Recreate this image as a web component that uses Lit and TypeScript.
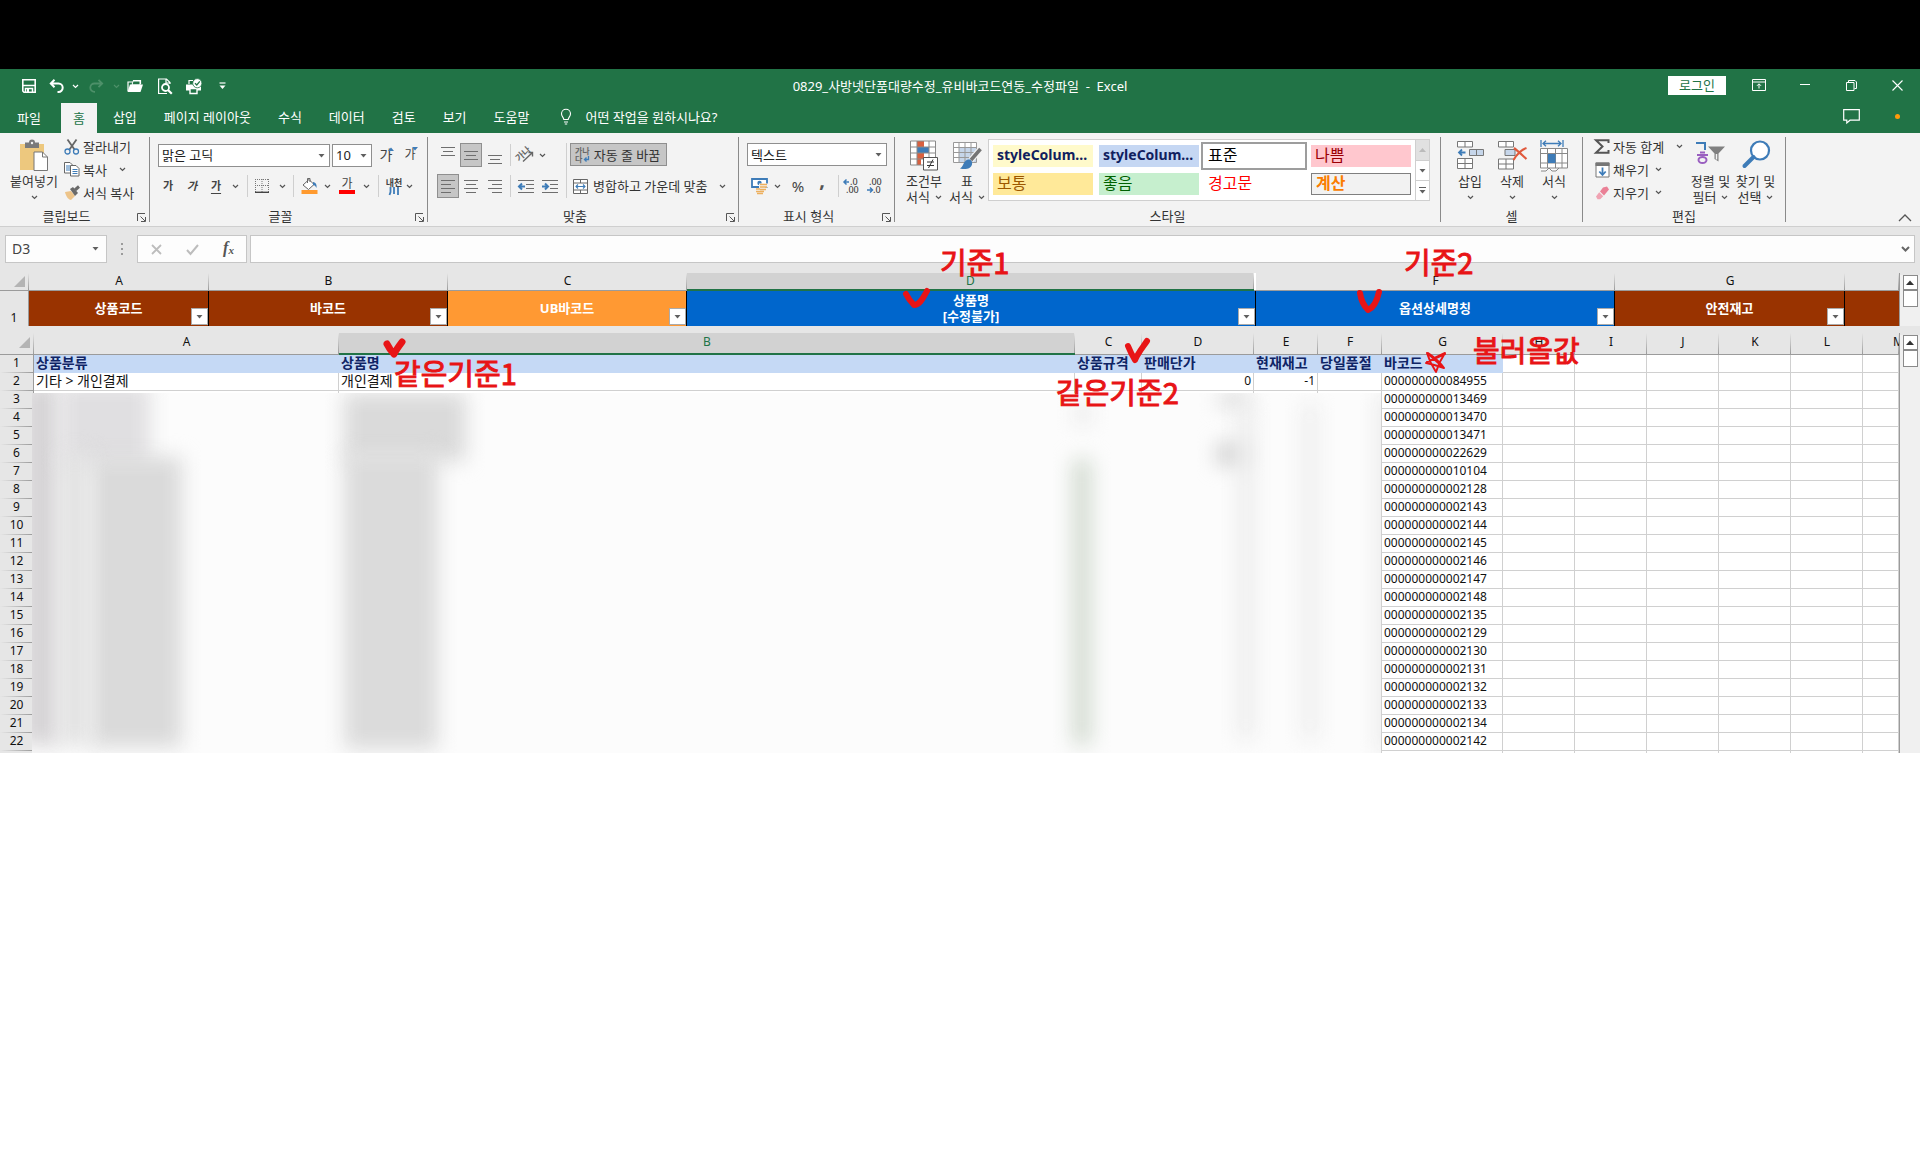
import { LitElement, html, css, svg, nothing, type TemplateResult } from "lit";
import { customElement } from "lit/decorators.js";
import { classMap } from "lit/directives/class-map.js";

const icon = (w: number, h: number, body: unknown) =>
  html`<svg class="icon" width=${w} height=${h} viewBox="0 0 ${w} ${h}" fill="none" aria-hidden="true">${body}</svg>`;

const GREY = "#6e6e6e";
const BLUE = "#3e7cb8";

const chevron = (color = "#555") =>
  icon(7, 5, svg`<path d="M1 1l2.5 2.5L6 1" stroke=${color} stroke-width="1.2"/>`);
const triangle = () => icon(7, 4, svg`<path d="M0.5 0h6L3.5 3.5z" fill="#606060"/>`);

const saveIcon = icon(16, 16, svg`<path d="M1.8 1.8h12.4v12.4H3l-1.200-1.200z" stroke="#fff" stroke-width="1.600"/><path d="M2 7.500h12" stroke="#fff" stroke-width="1.500"/><path d="M4.500 15v-4.500h7V15" stroke="#fff" stroke-width="1.500"/><path d="M6 11h2v3H6z" fill="#fff"/>`);
const undoIcon = icon(16, 14, svg`<path d="M5.500 0.800L1.800 4.500l3.700 3.700M2 4.500h7.500a4.200 4.200 0 010 8.400H8.500" stroke="#fff" stroke-width="2"/>`);
const redoIcon = icon(16, 14, svg`<path d="M10.500 0.800l3.700 3.700-3.700 3.700M14 4.500H6.500a4.200 4.200 0 000 8.400H7" stroke="#4d9069" stroke-width="1.800"/>`);
const folderIcon = icon(18, 14, svg`<path d="M2 12V3h4M7.500 3V1.500h7V5" stroke="#fff" stroke-width="1.200"/><path d="M7 2h7v4H6z" fill="#217346" stroke="#fff"/><path d="M4 5.500h13L14.500 13H1.500z" fill="#fff"/>`);
const previewIcon = icon(16, 17, svg`<path d="M10 15.500H1.600V1h7.900l3.500 3.500V6M9 1v4h4" stroke="#fff" stroke-width="1.200"/><circle cx="8.500" cy="9.500" r="3.500" stroke="#fff" stroke-width="1.800"/><path d="M11 12l3.800 3.800" stroke="#fff" stroke-width="2.200"/>`);
const printIcon = icon(18, 17, svg`<path d="M4 6V2.500h4" stroke="#fff" stroke-width="1.200"/><path d="M1 6.500h15v6H1z" fill="#fff"/><path d="M5 10.500h7v5H5z" fill="#217346" stroke="#fff" stroke-width="1.400"/><circle cx="12.300" cy="5.200" r="4.600" fill="#fff" stroke="#217346" stroke-width="0.800"/><path d="M10 5.200l1.800 1.800 3-3.600" stroke="#217346" stroke-width="1.300"/>`);
const moreIcon = icon(7, 8, svg`<path d="M0.500 1h6" stroke="#fff" stroke-width="1.200"/><path d="M0.500 3.500h6l-3 3.500z" fill="#fff"/>`);
const bulbIcon = icon(12, 17, svg`<path d="M3.800 11.500c0-2-2.300-3-2.300-5.700a4.500 4.500 0 019 0c0 2.700-2.300 3.700-2.300 5.700zM4 14h4M4.800 16h2.400" stroke="#fff" stroke-width="1.100"/>`);
const ribbonOptIcon = icon(14, 12, svg`<path d="M.5.500h13v11H.500zM.500 3h13M7 9.500V5M5 6.800l2-2 2 2" stroke="#fff"/>`);
const minIcon = icon(10, 10, svg`<path d="M0 4.500h10" stroke="#fff"/>`);
const restoreIcon = icon(11, 11, svg`<path d="M.5 2.500h7.500v8H.500zM2.500 2.500V.500h6.500l1.500 1.500v6.500H8.500" stroke="#fff"/>`);
const closeIcon = icon(11, 11, svg`<path d="M.5.500l10 10M10.500.500l-10 10" stroke="#fff" stroke-width="1.100"/>`);
const commentIcon = icon(17, 15, svg`<path d="M.7.700h15.600v10.500H7L3.800 14v-2.800H.700z" stroke="#fff" stroke-width="1.200"/>`);

const pasteIcon = icon(30, 32, svg`<path d="M1 4h24v26H1z" fill="#edc87e"/><path d="M6 2.500h4a3 3 0 016 0h4V8H6z" fill="#7a7a7a"/><circle cx="13" cy="3" r="1.200" fill="#f3f3f3"/><path d="M15 12h8.500l5 5v13.500H15z" fill="#fff" stroke="#777"/><path d="M23.500 12v5h5" stroke="#777"/>`);
const cutIcon = icon(16, 16, svg`<path d="M3.500.500l7 10M12.500.500l-7 10" stroke="#666" stroke-width="1.800"/><circle cx="3.500" cy="12.500" r="2.500" stroke=${BLUE} stroke-width="1.300"/><circle cx="12" cy="12.500" r="2.500" stroke=${BLUE} stroke-width="1.300"/>`);
const copyIcon = icon(16, 15, svg`<path d="M.5.500h5.500l2.500 2.500v8H.500z" fill="#fff" stroke="#666"/><path d="M2 4h4M2 6h4M2 8h4" stroke=${BLUE}/><path d="M6.500 3.500h5.500l3 3v7.500H6.500z" fill="#fff" stroke="#666"/><path d="M8.500 7.500h5M8.500 9.500h5M8.500 11.500h5" stroke=${BLUE}/>`);
const brushIcon = icon(16, 14, svg`<path d="M1 6l6-1 4 5-4 4c-2 0-5-3-6-8z" fill="#edc48a"/><path d="M6 3l3-2 5 6-3 3z" fill="#6a6a6a"/><path d="M11 4l4-3.500" stroke="#6a6a6a" stroke-width="3"/>`);
const borderIcon = icon(14, 14, svg`<path d="M.5 0v13M13.500 0v13M7 0v13M0 .500h14M0 6.500h14" stroke="#777" stroke-dasharray="1 1"/><path d="M0 13.300h14" stroke="#444" stroke-width="1.400"/>`);
const fillIcon = icon(17, 16, svg`<path d="M2 7l6-5.500 5 5L7.500 11.500z" fill="#fff" stroke="#666"/><path d="M6.500 5V.500h2.500V4" stroke="#666"/><path d="M12 4c3 .5 4 3 3.500 6-1-2-2-3-3.500-3z" fill=${BLUE}/><path d="M.5 12h16v4H.500z" fill="#ff9a2e"/>`);
const lines = (rows: [number, number][], h: number) =>
  icon(14, h, svg`${rows.map(([x, w], i) => svg`<path d="M${x} ${i * 4 + 0.5}h${w}" stroke=${GREY}/>`)}`);
const rowsThree = lines([[0, 14], [2, 10], [0, 14]], 9);
const alignLeft = lines([[0, 14], [0, 10], [0, 14], [0, 10]], 13);
const alignCenter = lines([[0, 14], [2, 10], [0, 14], [2, 10]], 13);
const alignRight = lines([[0, 14], [4, 10], [0, 14], [4, 10]], 13);
const rotateIcon = icon(18, 16, svg`<g transform="rotate(-42 8 8)"><text x="-1" y="9" font-size="9" font-weight="700" fill="#666">가나</text></g><path d="M6 14.500L15 6M11.500 5.500H15.500V9.500" stroke="#666" stroke-width="1.400"/>`);
const indent = (dir: number) =>
  icon(17, 13, svg`<path d="M0 .500h16M8 4.500h8M8 8.500h8M0 12.500h16" stroke=${GREY}/>${dir < 0
    ? svg`<path d="M7 6.500H2M4 3.500l-3 3 3 3" stroke=${BLUE} stroke-width="2"/>`
    : svg`<path d="M0 6.500h5M3 3.500l3 3-3 3" stroke=${BLUE} stroke-width="2"/>`}`);
const wrapIcon = icon(15, 16, svg`<text x="0" y="7" font-size="8" font-weight="700" fill="#666">가나</text><text x="0" y="15" font-size="8" font-weight="700" fill="#666">다</text><path d="M13.500 9v3.500H9.500M11.500 10.500l-2 2 2 2" stroke=${BLUE} stroke-width="1.300"/>`);
const mergeIcon = icon(15, 15, svg`<path d="M.5.500h14v14H.500zM.500 4h14M.500 11h14M7.500.500V4M7.500 11v3.500" stroke="#666" fill="#fff"/><path d="M3 7.500h9M5 5.500l-2 2 2 2M10 5.500l2 2-2 2" stroke=${BLUE} stroke-width="1.100"/>`);
const currencyIcon = icon(17, 16, svg`<path d="M1 1h15v8H1z" fill="#fff" stroke=${BLUE} stroke-width="1.800"/><circle cx="8.500" cy="5" r="2.200" fill=${BLUE}/><path d="M8 5.500h9v4h-3v6.500H4v-4h4z" fill="#f3f3f3"/><path d="M9 6.500h7M9 9h7M5 11h4M9 11.500h6M5 13.500h8M6 15.500h6" stroke="#edb05e" stroke-width="1.500"/>`);
const decIcon = (inc: boolean) =>
  icon(17, 16, svg`<text x=${inc ? 7 : 3} y="7" font-size="9" font-weight="500" fill="#444">${inc ? ".0" : ".00"}</text><text x=${inc ? 3 : 7} y="15" font-size="9" font-weight="500" fill="#444">${inc ? ".00" : ".0"}</text>${inc
    ? svg`<path d="M6 4H1.500M3.500 1.500L1 4l2.500 2.500" stroke=${BLUE} stroke-width="1.500"/>`
    : svg`<path d="M1 12h5M4 9.500L6.500 12 4 14.500" stroke=${BLUE} stroke-width="1.500"/>`}`);
const condIcon = icon(30, 31, svg`<path d="M1.500 1h25v24h-25z" fill="#fff"/><path d="M8 1h7v6H8zM8 13h7v6H8z" fill="#d9603f"/><path d="M8 7h12v6H8z" fill=${BLUE}/><path d="M8 19h4v6H8z" fill="#d9603f"/><path d="M1.500 1h25v24h-25zM1.500 7h25M1.500 13h25M1.500 19h25M8 1v24M20 1v24" stroke="#8a8a8a"/><path d="M14.500 17.500h14v12.500h-14z" fill="#fff" stroke="#555"/><path d="M18 22h7M18 25.500h7M24 19.500l-4.500 8.500" stroke="#333"/>`);
const tableIcon = icon(30, 30, svg`<path d="M1.500 2.500h23v20h-23z" fill="#fff"/><path d="M7 8h17v14H7z" fill="#c6d6ea"/><path d="M1.500 2.500h23v20h-23zM1.500 7.500h23M1.500 12.500h23M1.500 17.500h23M7 2.500v20M13 2.500v20M19 2.500v20" stroke="#999"/><path d="M28.500 9L19 20" stroke="#f3f3f3" stroke-width="6"/><path d="M28.500 9L19 20" stroke="#757575" stroke-width="3.500"/><path d="M14 20.500c3-2.500 7 0 6 4-1 4-6 5.500-12 4 3-1.500 3-5.500 6-8z" fill=${BLUE}/>`);
const insertIcon = icon(28, 30, svg`<path d="M1.500 1.500h15v5.500h-15zM9 1.500V7M1.500 18.500h15v10h-15zM9 18.500v10M1.500 23.500h15" fill="#fff" stroke="#777"/><path d="M13.500 9.500h14v6h-14zM20.500 9.500v6" fill="#c6d6ea" stroke="#777"/><path d="M9.500 12.500H4M6 9.500l-3 3 3 3" stroke=${BLUE} stroke-width="1.800"/>`);
const deleteIcon = icon(31, 30, svg`<path d="M1.500 1.500h15v5.500h-15zM9 1.500V7M1.500 19h15v10h-15zM9 19v10M1.500 24h15" fill="#fff" stroke="#777"/><path d="M8 9.500h10v6H8z" fill="#c6d6ea" stroke="#777"/><path d="M17 8c4 3 8 7 12.500 11M29.500 8c-6 2-10 7-13 12" stroke="#e0593c" stroke-width="2.200"/>`);
const formatIcon = icon(30, 32, svg`<path d="M2 0v7M24 0v7M4 3.500h18M7 .8L4 3.500l3 2.700M19 .8l3 2.700-3 2.700" stroke=${BLUE} stroke-width="1.300"/><path d="M1.500 8.500h27v19H19l-3 3h-4l-2-1.500-3 1.500h-5.500z" fill="#fff"/><path d="M1.500 8.500h27v19.500h-27zM1.500 13.500h27M1.500 23h27M8.500 8.500V28M16.500 8.500V28M23 8.500V28M2 31h5l3-3 3 3h4l3-3" stroke="#888"/><path d="M9 14h7.500v9H9z" fill=${BLUE}/>`);
const sumIcon = icon(16, 15, svg`<path d="M14.500 4V1.200H2l6.500 6.300L2 13.800h12.500V11" stroke="#555" stroke-width="2"/>`);
const fillDownIcon = icon(15, 16, svg`<path d="M1 1h13v14H1z" fill="#fff" stroke="#777"/><path d="M.5.500h14V4H.500z" fill="#777"/><path d="M7.500 5.500v7M4.300 9.500l3.200 3.500 3.200-3.500" stroke=${BLUE} stroke-width="1.800"/>`);
const eraseIcon = icon(15, 14, svg`<path d="M8 1.500l4-1 2 3-5 6-4-4z" fill="#ea8096"/><path d="M4.200 6.300l4 4-3 3H2.500L1 10.500z" fill="#f0a3b3"/>`);
const sortIcon = icon(31, 26, svg`<path d="M1 3h9v7" stroke=${BLUE} stroke-width="2"/><path d="M2 15h11M5 12.500h5" stroke="#9a5fc0" stroke-width="1.800"/><ellipse cx="7.500" cy="20" rx="4" ry="3" stroke="#9a5fc0" stroke-width="2"/><path d="M13 6.500h17l-6.500 7v8l-4-2.500v-5.500z" fill="#808080"/><path d="M21.500 14v5.500" stroke="#f3f3f3" stroke-width="1.500"/>`);
const findIcon = icon(28, 28, svg`<circle cx="18" cy="10.500" r="9" fill="#fff" stroke=${BLUE} stroke-width="2.200"/><path d="M11.500 17L2.500 26" stroke=${BLUE} stroke-width="4" stroke-linecap="round"/>`);
const launcherIcon = icon(9, 9, svg`<path d="M.5 8V.500H8M3.500 3.500L8 8M8.500 4v4.500H4" stroke="#555"/>`);
const collapseIcon = icon(14, 8, svg`<path d="M1 7l6-6 6 6" stroke="#555" stroke-width="1.300"/>`);
const cancelIcon = icon(11, 11, svg`<path d="M1 1l9 9M10 1l-9 9" stroke="#bdbdbd" stroke-width="1.800"/>`);
const enterIcon = icon(13, 11, svg`<path d="M1 6l3.500 4L12 1" stroke="#bdbdbd" stroke-width="2"/>`);
const arrowUp = icon(8, 5, svg`<path d="M0 5l4-4.500L8 5z" fill="#333"/>`);

const TABS = ["파일", "홈", "삽입", "페이지 레이아웃", "수식", "데이터", "검토", "보기", "도움말"];
const STYLES: [string, string][] = [
  ["styleColum...", "note"], ["styleColum...", "head"], ["표준", "normal"], ["나쁨", "bad"],
  ["보통", "neutral"], ["좋음", "good"], ["경고문", "warn"], ["계산", "calc"],
];
const BARCODES = [
  "000000000084955", "000000000013469", "000000000013470", "000000000013471", "000000000022629",
  "000000000010104", "000000000002128", "000000000002143", "000000000002144", "000000000002145",
  "000000000002146", "000000000002147", "000000000002148", "000000000002135", "000000000002129",
  "000000000002130", "000000000002131", "000000000002132", "000000000002133", "000000000002134",
  "000000000002142",
];
const COLS = ["A", "B", "C", "D", "E", "F", "G", "H", "I", "J", "K", "L", "M"];
const HEADINGS = ["상품분류", "상품명", "상품규격", "판매단가", "현재재고", "당일품절", "바코드"];

const base = css`
  * { box-sizing: border-box; }
  svg text { font-family: "Noto Sans", "Noto Sans CJK KR", sans-serif; }
  .icon { display: block; flex: none; overflow: visible; }
  button, input, select {
    font: inherit; color: inherit; margin: 0; padding: 0; border: 0; background: none; border-radius: 0; outline: none;
  }
  button { display: flex; align-items: center; justify-content: center; white-space: nowrap; }
`;

@customElement("title-bar")
class TitleBar extends LitElement {
  static styles = [base, css`
    :host { display: block; background: #217346; color: #fff; }
    .title { display: grid; grid-template-columns: 1fr auto 1fr; height: 34px; align-items: center; }
    .quick { display: grid; grid-template-columns: 26px 30px 6px 36px 4px 34px 26px 32px 25px; padding-left: 16px; justify-items: center; align-items: center; }
    .name { font-size: 13px; white-space: pre; line-height: 16px; }
    .window { display: flex; justify-content: flex-end; align-items: center; height: 34px; padding-bottom: 2px; }
    .window button { width: 46px; height: 30px; }
    .window .login { width: 58px; height: 19px; background: #fff; color: #217346; margin-right: 10px; padding-bottom: 1px; line-height: 16px; }
    .tabs { display: flex; height: 30px; align-items: stretch; line-height: 16px; }
    .tabs button { padding-bottom: 3px; }
    .tab { padding: 0 14px 0 13px; }
    .tab.first { padding: 0 20px 0 17px; }
    .tab.on { background: #f3f3f3; color: #217346; padding: 0 12px; margin-right: 3px; }
    .tell { padding: 0 14px; gap: 13px; margin-left: 3px; }
    .right { margin-left: auto; display: flex; }
    .right button { width: 46px; }
    .dot { width: 5px; height: 5px; border-radius: 50%; background: #ff9a0a; }
  `];
  render() {
    const q: [string, TemplateResult][] = [
      ["저장", saveIcon], ["실행 취소", undoIcon], ["실행 취소 목록", chevron("#fff")], ["다시 실행", redoIcon],
      ["다시 실행 목록", chevron("#4d9069")], ["열기", folderIcon], ["미리 보기", previewIcon], ["인쇄", printIcon], ["사용자 지정", moreIcon],
    ];
    const w: [string, TemplateResult][] = [
      ["리본 표시 옵션", ribbonOptIcon], ["최소화", minIcon], ["이전 크기로", restoreIcon], ["닫기", closeIcon],
    ];
    return html`
      <div class="title">
        <div class="quick">${q.map(([l, i]) => html`<button aria-label=${l}>${i}</button>`)}</div>
        <div class="name">0829_사방넷단품대량수정_유비바코드연동_수정파일  -  Excel</div>
        <div class="window"><button class="login">로그인</button>${w.map(([l, i]) => html`<button aria-label=${l}>${i}</button>`)}</div>
      </div>
      <nav class="tabs">
        ${TABS.map((t, i) => html`<button class=${classMap({ tab: true, first: i === 0, on: i === 1 })}>${t}</button>`)}
        <button class="tell">${bulbIcon}어떤 작업을 원하시나요?</button>
        <div class="right"><button aria-label="메모">${commentIcon}</button><button aria-label="알림"><span class="dot"></span></button></div>
      </nav>`;
  }
}

@customElement("ribbon-bar")
class RibbonBar extends LitElement {
  static styles = [base, css`
    :host { display: flex; height: 94px; background: #f3f3f3; border-bottom: 1px solid #cfcfcf; color: #333; line-height: 16px; }
    .group { display: grid; grid-template-rows: 76px 16px; flex: none; }
    .rule { width: 1px; height: 85px; margin-top: 4px; background: #8a8a8a; flex: none; }
    .foot { display: flex; align-items: center; }
    .foot span { flex: 1; text-align: center; padding-bottom: 2px; }
    .foot button { width: 16px; }
    .clip { width: 149px; } .font { width: 277px; } .align { width: 310px; } .number { width: 155px; }
    .style { width: 545px; } .cells { width: 141px; } .edit { width: 202px; }
    .row { display: flex; }
    .big { flex-direction: column; justify-content: flex-start; padding-top: 7px; height: 76px; }
    .pic { height: 33px; display: flex; align-items: flex-start; justify-content: center; }
    .chev { height: 16px; display: flex; align-items: center; }
    .two { display: flex; align-items: center; gap: 5px; }
    .paste { width: 56px; margin-left: 6px; margin-right: 2px; }
    .list { display: grid; grid-template-rows: 23px 23px 23px; padding-top: 2px; align-content: start; }
    .list button { justify-content: flex-start; gap: 3px; }
    .list .glyph { width: 16px; display: flex; justify-content: center; }
    .list .chev { margin-left: 9px; }
    .list .far { margin-left: 9px; } .list .near { margin-left: 3px; }
    .rows { display: grid; grid-template-rows: 24px 24px; row-gap: 7px; padding-top: 10px; align-content: start; }
    .grid { display: grid; justify-items: center; align-items: center; height: 24px; }
    .f1 { grid-template-columns: 172px 2px 40px 2px 26px 22px; padding-left: 8px; }
    .f2 { grid-template-columns: 24px 24px 24px 14px 10px 20px 20px 2px 30px 7px 32px 7px 16px 16px 14px; padding-left: 6px; }
    .a1 { grid-template-columns: 23px 24px 24px 7px 24px 8px; padding-left: 8px; }
    .a2 { grid-template-columns: 23px 24px 24px 7px 24px 24px; padding-left: 8px; }
    .a1 .on, .a2 .on { width: 22px; height: 24px; background: #c6c6c6; border: 1px solid #8f8f8f; }
    .hi { padding-bottom: 8px; } .lo { padding-top: 8px; }
    .alignbody { display: grid; grid-template-columns: 134px 8px 1fr; }
    .tall { margin-top: 10px; height: 55px; }
    .wrap { width: 97px; height: 23px; gap: 4px; background: #c6c6c6; border: 1px solid #8f8f8f; padding-right: 2px; }
    .merge { gap: 5px; padding-left: 3px; justify-content: flex-start; height: 24px; }
    .merge .icon:last-child { margin-left: 7px; }
    .n2 { grid-template-columns: 24px 12px 30px 18px 14px 12px 34px; padding-left: 8px; }
    .vr { width: 1px; height: 22px; background: #cfcfcf; }
    .tall.vr { height: 55px; justify-self: center; }
    .pick { position: relative; display: block; justify-self: start; height: 23px; }
    .pick select { width: 100%; height: 23px; border: 1px solid #8f8f8f; background: #fff; appearance: none; padding-left: 3px; display: block; color: #222; }
    .pick .icon { position: absolute; right: 5px; top: 10px; pointer-events: none; }
    .w172 { width: 172px; } .w40 { width: 40px; } .w140 { width: 140px; margin-left: 8px; }
    .ga { font-size: 11px; font-weight: 700; color: #444; }
    .it { font-style: italic; } .un { text-decoration: underline; text-underline-offset: 3px; }
    .gr { display: flex; align-items: flex-start; color: #444; }
    .gr .icon { margin-left: -4px; }
    .g14 { font-size: 14px; } .g12 { font-size: 12px; }
    .color { flex-direction: column; font-size: 12px; color: #444; line-height: 12px; }
    .bar { width: 16px; height: 4px; background: #f00; }
    .ruby { flex-direction: column; font-size: 9px; font-weight: 700; line-height: 9px; color: #444; }
    .pct { font-size: 15px; color: #444; } .comma { font-size: 20px; font-weight: 700; line-height: 8px; color: #555; padding-bottom: 12px; }
    .cond { width: 46px; margin-left: 6px; } .tbl { width: 40px; margin-right: 1px; }
    .gallery { margin-top: 6px; width: 442px; height: 62px; background: #fff; border: 1px solid #cfcfcf; display: flex; justify-content: space-between; }
    .chips { display: grid; grid-template-columns: 100px 100px 106px 100px; grid-template-rows: 22px 22px; gap: 6px 4px; padding: 5px 0 0 4px; }
    .chip { font-size: 16px; justify-content: flex-start; padding: 0 0 3px 4px; line-height: 18px; }
    .note, .head { font-size: 14px; font-weight: 700; color: #10205e; }
    .note { background: #fffacb; } .head { background: #c5d7f3; margin-left: 2px; margin-right: -2px; }
    .normal { color: #000; border: 2px solid #9d9d9d; height: 28px; margin-top: -3px; padding-left: 5px; }
    .bad { background: #ffc7ce; color: #9c0006; } .neutral { background: #ffe999; color: #9c5700; }
    .good { background: #c6efce; color: #006100; margin-left: 2px; margin-right: -2px; } .warn { color: #f00; padding-left: 7px; }
    .calc { background: #f2f2f2; color: #fa7d00; font-weight: 700; border: 1px solid #7f7f7f; }
    .spin { width: 14px; display: grid; grid-template-rows: 20px 20px 20px; border-left: 1px solid #cfcfcf; }
    .spin button + button { border-top: 1px solid #cfcfcf; }
    .spin button:first-child { background: #e1e1e1; }
    .spin .last { flex-direction: column; gap: 2px; }
    .dash { width: 7px; height: 1px; background: #606060; }
    .c42 { width: 42px; } .c42:first-child { margin-left: 8px; }
    .edit .list { width: 94px; margin-left: 11px; }
    .sort { width: 45px; }
    .end { margin: auto 8px 4px auto; height: 9px; }
  `];

  private group(cls: string, label: string, body: unknown, launch = false) {
    return html`<section class="group ${cls}" aria-label=${label}>${body}
      <div class="foot"><span>${label}</span>${launch ? html`<button aria-label="${label} 설정">${launcherIcon}</button>` : nothing}</div>
    </section><div class="rule"></div>`;
  }
  private big(cls: string, pic: unknown, first: string, second = "") {
    return html`<button class="big ${cls}"><span class="pic">${pic}</span><span>${first}</span>
      ${second ? html`<span class="two">${second}${chevron()}</span>` : html`<span class="chev">${chevron()}</span>`}</button>`;
  }
  private item(pic: unknown, text: string, chev = "") {
    return html`<button><span class="glyph">${pic}</span>${text}${chev ? html`<span class=${chev}>${chevron()}</span>` : nothing}</button>`;
  }
  private pick(cls: string, label: string, value: string) {
    return html`<label class="pick ${cls}"><select aria-label=${label}><option>${value}</option></select>${triangle()}</label>`;
  }
  private chev = (l: string) => html`<button aria-label=${l}>${chevron()}</button>`;

  render() {
    const vr = html`<span class="vr"></span>`;
    return html`
      ${this.group("clip", "클립보드", html`<div class="row">${this.big("paste", pasteIcon, "붙여넣기")}
        <div class="list">${this.item(cutIcon, "잘라내기")}${this.item(copyIcon, "복사", "chev")}${this.item(brushIcon, "서식 복사")}</div></div>`, true)}
      ${this.group("font", "글꼴", html`<div class="rows">
        <div class="grid f1">${this.pick("w172", "글꼴", "맑은 고딕")}<span></span>${this.pick("w40", "글꼴 크기", "10")}<span></span>
          <button class="gr g14" aria-label="글꼴 크기 크게">가${icon(6, 4, svg`<path d="M0 4l3-3.500L6 4z" fill=${BLUE}/>`)}</button>
          <button class="gr g12" aria-label="글꼴 크기 작게">가${icon(6, 4, svg`<path d="M0 0h6L3 3.500z" fill=${BLUE}/>`)}</button></div>
        <div class="grid f2"><button class="ga">가</button><button class="ga it">가</button><button class="ga un">가</button>${this.chev("밑줄")}${vr}
          <button aria-label="테두리">${borderIcon}</button>${this.chev("테두리 목록")}${vr}<button aria-label="채우기 색">${fillIcon}</button>${this.chev("채우기 색 목록")}
          <button class="color">가<span class="bar"></span></button>${this.chev("글꼴 색")}${vr}
          <button class="ruby">내천${icon(10, 8, svg`<path d="M1.500 0v5L.500 8M5 0v7M9 0v8" stroke=${BLUE} stroke-width="1.800"/>`)}</button>${this.chev("윗주")}</div></div>`, true)}
      ${this.group("align", "맞춤", html`<div class="alignbody">
        <div class="rows"><div class="grid a1"><button class="hi" aria-label="위쪽 맞춤">${rowsThree}</button><button class="on" aria-label="가운데 맞춤">${rowsThree}</button>
          <button class="lo" aria-label="아래쪽 맞춤">${rowsThree}</button>${vr}<button aria-label="방향">${rotateIcon}</button>${this.chev("방향 목록")}</div>
          <div class="grid a2"><button class="on" aria-label="왼쪽 맞춤">${alignLeft}</button><button aria-label="가로 가운데 맞춤">${alignCenter}</button>
          <button aria-label="오른쪽 맞춤">${alignRight}</button>${vr}<button aria-label="내어쓰기">${indent(-1)}</button><button aria-label="들여쓰기">${indent(1)}</button></div></div>
        <span class="vr tall"></span>
        <div class="rows"><button class="wrap">${wrapIcon}자동 줄 바꿈</button><button class="merge">${mergeIcon}병합하고 가운데 맞춤${chevron()}</button></div></div>`, true)}
      ${this.group("number", "표시 형식", html`<div class="rows">${this.pick("w140", "표시 형식", "텍스트")}
        <div class="grid n2"><button aria-label="회계 표시 형식">${currencyIcon}</button>${this.chev("통화 목록")}<button class="pct">%</button><button class="comma">,</button>${vr}
        <button aria-label="자릿수 늘림">${decIcon(true)}</button><button aria-label="자릿수 줄임">${decIcon(false)}</button></div></div>`, true)}
      ${this.group("style", "스타일", html`<div class="row">${this.big("cond", condIcon, "조건부", "서식")}${this.big("tbl", tableIcon, "표", "서식")}
        <div class="gallery"><div class="chips">${STYLES.map(([t, c]) => html`<button class="chip ${c}">${t}</button>`)}</div>
        <div class="spin"><button aria-label="위로">${icon(7, 4, svg`<path d="M0 4l3.500-4L7 4z" fill="#bbb"/>`)}</button><button aria-label="아래로">${triangle()}</button>
        <button class="last" aria-label="자세히"><span class="dash"></span>${triangle()}</button></div></div></div>`)}
      ${this.group("cells", "셀", html`<div class="row">${this.big("c42", insertIcon, "삽입")}${this.big("c42", deleteIcon, "삭제")}${this.big("c42", formatIcon, "서식")}</div>`)}
      ${this.group("edit", "편집", html`<div class="row"><div class="list">${this.item(sumIcon, "자동 합계", "far")}${this.item(fillDownIcon, "채우기", "near")}${this.item(eraseIcon, "지우기", "near")}</div>
        ${this.big("sort", sortIcon, "정렬 및", "필터")}${this.big("sort", findIcon, "찾기 및", "선택")}</div>`)}
      <button class="end" aria-label="리본 메뉴 축소">${collapseIcon}</button>`;
  }
}

@customElement("formula-bar")
class FormulaBar extends LitElement {
  static styles = [base, css`
    :host { display: flex; height: 46px; background: #e6e6e6; padding: 8px 5px 10px; color: #444; }
    .box { position: relative; border: 1px solid #c6c6c6; background: #fdfdfd; display: flex; align-items: center; }
    .cell { width: 102px; } .cell input { width: 80px; height: 24px; padding: 0 0 2px 6px; font-size: 14px; }
    .cell .icon { margin-left: 6px; }
    .dots { width: 30px; display: flex; flex-direction: column; gap: 3px; align-items: center; justify-content: center; }
    .dots i { width: 2px; height: 2px; background: #9b9b9b; }
    .tools { width: 110px; display: grid; grid-template-columns: 36px 37px 35px; }
    .fx { font: italic 700 16px/16px "Liberation Serif", serif; color: #555; padding-bottom: 2px; }
    .small { font-size: 11px; line-height: 16px; padding-top: 3px; }
    .entry { flex: 1; margin-left: 3px; } .entry input { flex: 1; height: 24px; padding-left: 6px; }
    .entry button { width: 18px; }
  `];
  render() {
    return html`
      <div class="box cell"><input aria-label="이름 상자" value="D3" />${triangle()}</div>
      <div class="dots"><i></i><i></i><i></i></div>
      <div class="box tools"><button aria-label="취소">${cancelIcon}</button><button aria-label="입력">${enterIcon}</button><button class="fx">f<span class="small">x</span></button></div>
      <div class="box entry"><input aria-label="수식" value="" /><button aria-label="수식 입력줄 확장">${icon(9, 6, svg`<path d="M1 1l3.500 3.500L8 1" stroke="#666" stroke-width="2"/>`)}</button></div>`;
  }
}

const sheet = css`
  :host { display: grid; grid-template-columns: 1fr 21px; background: #e6e6e6; overflow: hidden; position: relative; }
  table { table-layout: fixed; border-collapse: separate; border-spacing: 0; width: 100%; font-size: 12px; color: #111; align-self: start; }
  th, td { padding: 0; overflow: hidden; white-space: nowrap; }
  thead th { font-weight: 400; line-height: 14px; padding-bottom: 1px; background: linear-gradient(#e6e6e6, #9b9b9b) right / 1px 100% no-repeat #e6e6e6; border-bottom: 1px solid #9b9b9b; }
  thead .sel { background-color: #d2d2d2; color: #217346; border-bottom: 2px solid #217346; padding-bottom: 0; }
  tbody th { font-weight: 400; background: #e6e6e6; border-right: 1px solid #9b9b9b; }
  .corner .icon { margin-left: auto; margin-right: 4px; }
  .scroll { background: #f0f0f0; display: flex; flex-direction: column; align-items: center; border-left: 1px solid #9b9b9b; }
  .cap { width: 100%; background: #e6e6e6; flex: none; }
  .scroll button, .thumb { width: 15px; height: 15px; border: 1px solid #8a8a8a; background: #fff; flex: none; }
  .thumb { height: 17px; }
`;
const corner = icon(11, 11, svg`<path d="M11 0v11H0z" fill="#b4b4b4"/>`);

@customElement("upper-sheet")
class UpperSheet extends LitElement {
  static styles = [base, sheet, css`
    :host { height: 53px; }
    .c0 { width: 29px; } .ca { width: 180px; } .cb, .cc { width: 239px; } .ce { width: 2px; } .cf { width: 359px; } .cg { width: 230px; } .ch { width: 54px; }
    thead th { height: 18px; }
    thead .hid { background: #fff; }
    tbody th { height: 35px; vertical-align: bottom; line-height: 17px; }
    td { height: 35px; border-right: 1px solid #000; color: #fff; font-weight: 700; font-size: 13px; }
    .in { display: grid; grid-template-columns: 1fr; grid-template-areas: "x"; height: 35px; align-items: center; justify-items: center; text-align: center; line-height: 16px; }
    .in > * { grid-area: x; }
    .in span { padding-bottom: 2px; }
    .in button { width: 17px; height: 17px; background: #fff; border: 1px solid #ababab; place-self: end; margin-bottom: 1px; }
    .brown { background: #993300; } .orange { background: #ff9933; } .blue { background: #0066cc; }
    .edge { border-right: 0; }
    .cap { height: 2px; }
  `];
  render() {
    const cell = (cls: string, body: unknown, span = 1) =>
      html`<td class=${cls} colspan=${span}><div class="in"><span>${body}</span><button aria-label="필터">${triangle()}</button></div></td>`;
    return html`<table>
        <colgroup><col class="c0" /><col class="ca" /><col class="cb" /><col class="cc" /><col /><col class="ce" /><col class="cf" /><col class="cg" /><col class="ch" /></colgroup>
        <thead><tr><th class="corner">${corner}</th><th>A</th><th>B</th><th>C</th><th class="sel">D</th><th class="hid"></th><th>F</th><th>G</th><th></th></tr></thead>
        <tbody><tr><th>1</th>${cell("brown", "상품코드")}${cell("brown", "바코드")}${cell("orange", "UB바코드")}
          ${cell("blue", html`상품명<br />[수정불가]`, 2)}${cell("blue", "옵션상세명칭")}${cell("brown", "안전재고")}<td class="brown edge"></td></tr></tbody>
      </table>
      <div class="scroll"><div class="cap"></div><button aria-label="위로 스크롤">${arrowUp}</button><div class="thumb"></div></div>`;
  }
}

@customElement("lower-sheet")
class LowerSheet extends LitElement {
  static styles = [base, sheet, css`
    :host { height: 420px; }
    .c0 { width: 34px; } .ca { width: 305px; } .cc { width: 67px; } .cd { width: 112px; } .ce, .cf { width: 64px; } .cg { width: 121px; }
    .ch { width: 72px; } .cm { width: 36px; }
    thead th { height: 22px; padding-bottom: 3px; }
    thead .sel { padding-bottom: 2px; }
    thead .cut { text-align: left; padding-left: 30px; }
    tbody th, td { height: 18px; line-height: 16px; vertical-align: top; }
    tbody th { background: linear-gradient(90deg, #e6e6e6, #9b9b9b) bottom / 100% 1px no-repeat #e6e6e6; }
    td { background: #fff; border-right: 1px solid #d0d0d0; border-bottom: 1px solid #d0d0d0; padding-left: 2px; }
    .head { background: #c5d9f5; border-color: #c5d9f5; color: #0f2465; font-weight: 700; font-size: 14px; }
    .word { font-size: 14px; }
    .num { text-align: right; padding-right: 2px; }
    .cap { height: 2px; }
    .veil { position: absolute; left: 32px; right: 539px; top: 60px; bottom: 0; background: #fcfcfc; overflow: hidden; }
    .smear { position: absolute; filter: blur(10px); background: #dadada; }
    .s1 { left: -10px; top: -10px; width: 38px; height: 362px; background: #d6d4d6; }
    .s2 { left: 28px; top: -10px; width: 90px; height: 84px; background: #e0dfe1; }
    .s3 { left: 58px; top: 64px; width: 92px; height: 290px; }
    .s4 { left: 28px; top: 60px; width: 30px; height: 292px; background: #e2e2e2; }
    .s5 { left: 312px; top: 0; width: 122px; height: 68px; }
    .s6 { left: 312px; top: 60px; width: 94px; height: 296px; background: #dbdbdb; }
    .s7 { left: 1040px; top: 66px; width: 20px; height: 286px; background: #d4dcd2; }
    .s8 { left: 1042px; top: 10px; width: 18px; height: 22px; background: #ececec; }
    .s9 { left: 1186px; top: 0; width: 32px; height: 14px; background: #dcdcdc; }
    .s10 { left: 1184px; top: 50px; width: 30px; height: 22px; background: #d2d2d2; }
    .s11 { left: 1206px; top: 10px; width: 16px; height: 336px; background: #ebebeb; }
    .s12 { left: 1270px; top: 10px; width: 16px; height: 336px; background: #ededed; }
    .s13 { right: -10px; top: 0; width: 12px; height: 360px; background: #e4e4e4; }
  `];
  render() {
    const row = (n: number) => {
      if (n === 1) return COLS.map((_, i) => html`<td class=${i < 7 ? "head" : ""}>${HEADINGS[i] ?? ""}</td>`);
      const v: Record<number, string> = n === 2 ? { 0: "기타 > 개인결제", 1: "개인결제", 3: "0", 4: "-1" } : {};
      v[6] = BARCODES[n - 2] ?? "";
      return COLS.map((_, i) => html`<td class=${i === 3 || i === 4 ? "num" : i < 2 ? "word" : ""}>${v[i] ?? ""}</td>`);
    };
    return html`<table>
        <colgroup><col class="c0" /><col class="ca" /><col /><col class="cc" /><col class="cd" /><col class="ce" /><col class="cf" /><col class="cg" />
          ${[1, 2, 3, 4, 5].map(() => html`<col class="ch" />`)}<col class="cm" /></colgroup>
        <thead><tr><th class="corner">${corner}</th>${COLS.map((c) => html`<th class=${c === "B" ? "sel" : c === "M" ? "cut" : ""}>${c}</th>`)}</tr></thead>
        <tbody>${Array.from({ length: 23 }, (_, i) => html`<tr><th>${i < 22 ? i + 1 : ""}</th>${row(i + 1)}</tr>`)}</tbody>
      </table>
      <div class="scroll"><div class="cap"></div><button aria-label="위로 스크롤">${arrowUp}</button><div class="thumb"></div></div>
      <div class="veil">${Array.from({ length: 13 }, (_, i) => html`<div class="smear s${i + 1}"></div>`)}</div>`;
  }
}

@customElement("app-root")
class AppRoot extends LitElement {
  static styles = [base, css`
    :host { display: block; background: #fff; min-height: 100vh; font-family: "Noto Sans", "Noto Sans CJK KR", sans-serif; font-size: 13px; position: relative; }
    .top { height: 69px; background: #000; }
    .gap { height: 7px; background: #e6e6e6; }
    .mark { position: absolute; color: #e81416; -webkit-text-stroke: 1px #e81416; font: 400 29px/32px "Noto Sans CJK KR", sans-serif; white-space: nowrap; }
    .m1 { left: 940px; top: 245px; } .m2 { left: 1404px; top: 245px; }
    .m3 { left: 394px; top: 356px; } .m4 { left: 1056px; top: 375px; } .m5 { left: 1473px; top: 333px; }
    .tick { position: absolute; fill: none; stroke: #e81416; stroke-linecap: round; stroke-linejoin: round; }
    .t1 { left: 902px; top: 286px; } .t2 { left: 1356px; top: 287px; } .t3 { left: 383px; top: 338px; }
    .t4 { left: 1124px; top: 336px; } .t5 { left: 1424px; top: 350px; }
  `];
  render() {
    return html`
      <div class="top"></div>
      <title-bar></title-bar>
      <ribbon-bar></ribbon-bar>
      <formula-bar></formula-bar>
      <upper-sheet></upper-sheet>
      <div class="gap"></div>
      <lower-sheet></lower-sheet>
      <span class="mark m1">기준1</span><span class="mark m2">기준2</span>
      <span class="mark m3">같은기준1</span><span class="mark m4">같은기준2</span><span class="mark m5">불러올값</span>
      <svg class="tick t1" width="30" height="24" stroke-width="6"><path d="M4 8c2 4 5 8 8 11 6 0 9-7 13-14"/></svg>
      <svg class="tick t2" width="28" height="28" stroke-width="6"><path d="M4 6c1 7 4 13 8 17 5-2 9-9 11-18"/></svg>
      <svg class="tick t3" width="24" height="22" stroke-width="7"><path d="M4 6c2 4 4 7 7 10 2-4 5-8 8-12"/></svg>
      <svg class="tick t4" width="28" height="30" stroke-width="6"><path d="M4 10c2 5 4 9 7 14 3-7 8-13 12-19"/></svg>
      <svg class="tick t5" width="24" height="24" stroke-width="2"><path d="M3 3c2 7 5 13 9 19 2-7 5-13 9-19C14 6 8 9 2 13c6 1 12 3 18 5C14 13 9 8 3 3M4 3c6 4 12 9 16 15M21 4c-6 3-12 5-18 8"/></svg>`;
  }
}
